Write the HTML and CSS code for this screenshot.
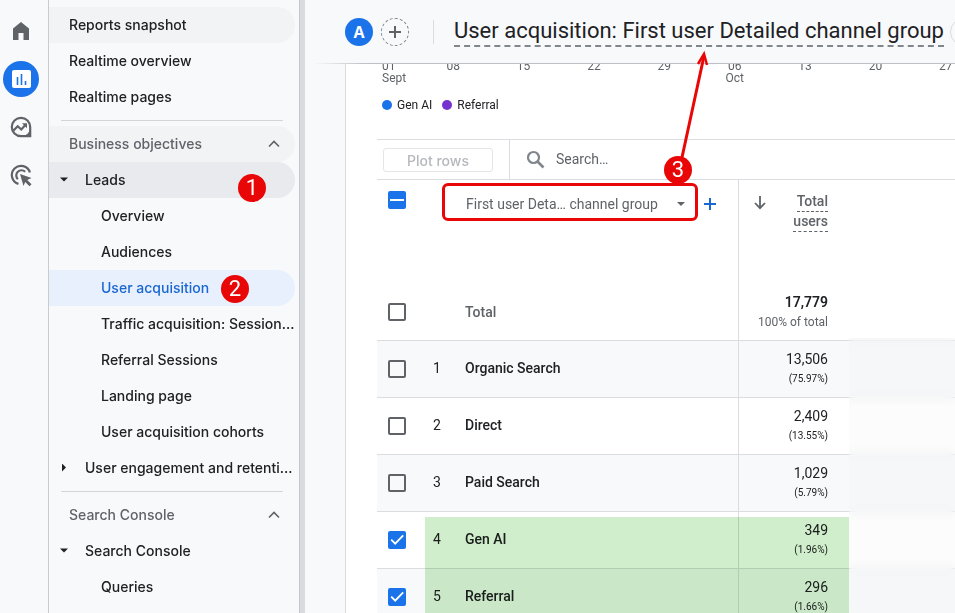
FILE: index.html
```
<!DOCTYPE html>
<html lang="en">
<head>
    <meta charset="UTF-8">
    <title>User acquisition: First user Detailed channel group</title>
    <link rel="stylesheet" href="styles.css">
</head>
<body>
    <nav class="rail">
        <a href="#" class="rail-item" aria-label="Home">
            <svg width="24" height="24" viewBox="0 0 24 24" fill="currentColor"><path d="M4 21V9.500L12 3l8 6.500V21h-5.500v-7h-5v7z"/></svg>
        </a>
        <a href="#" class="rail-item active" aria-label="Reports">
            <svg width="24" height="24" viewBox="0 0 24 24"><rect x="3" y="3" width="19" height="18" rx="2" fill="#fff"/><path d="M8.500 10v8M12.500 7v11M16.500 14v4" stroke="#1a73e8" stroke-width="1.600"/></svg>
        </a>
        <a href="#" class="rail-item" aria-label="Explore">
            <svg width="24" height="24" viewBox="0 0 24 24" fill="none" stroke="currentColor" stroke-width="2.200"><path d="M12 2.800a9.200 9.200 0 1 0 0 18.400h9.200V12A9.200 9.200 0 0 0 12 2.800z"/><path d="M15.500 21.200a10 10 0 0 0 5.700-5.700v5.700z" fill="currentColor" stroke-width="1"/><path d="M4.500 15.500l4.200-4.300 3.600 3.300 4.500-5"/><path d="M13 8.200h5v5z" fill="currentColor" stroke="none"/></svg>
        </a>
        <a href="#" class="rail-item" aria-label="Advertising">
            <svg width="24" height="24" viewBox="0 0 24 24" fill="none" stroke="currentColor" stroke-width="2.200"><path d="M9.500 20.900A9.200 9.200 0 1 1 20.900 9.500"/><path d="M8.800 16.200A5.200 5.200 0 1 1 16.200 8.800"/><path d="M11 11l11.500 4-4.200 2 4.200 4.200-2 2-4.300-4.200-1.700 4z" fill="currentColor" stroke="none"/></svg>
        </a>
    </nav>

    <aside class="sidebar">
        <a href="#" class="item hover">Reports snapshot</a>
        <a href="#" class="item">Realtime overview</a>
        <a href="#" class="item">Realtime pages</a>
        <hr>
        <button class="item section hover">Business objectives
            <svg width="12" height="8" viewBox="0 0 12 8"><path d="M1 6.500l5-5 5 5"/></svg>
        </button>
        <button class="item parent open">
            <i class="caret down"></i>Leads
            <span class="badge badge-leads">1</span>
        </button>
        <a href="#" class="item child">Overview</a>
        <a href="#" class="item child">Audiences</a>
        <a href="#" class="item child selected">User acquisition <span class="badge badge-acquisition">2</span></a>
        <a href="#" class="item child">Traffic acquisition: Session…</a>
        <a href="#" class="item child">Referral Sessions</a>
        <a href="#" class="item child">Landing page</a>
        <a href="#" class="item child">User acquisition cohorts</a>
        <button class="item parent"><i class="caret right"></i>User engagement and retenti…</button>
        <hr>
        <button class="item section">Search Console
            <svg width="12" height="8" viewBox="0 0 12 8"><path d="M1 6.500l5-5 5 5"/></svg>
        </button>
        <button class="item parent"><i class="caret down"></i>Search Console</button>
        <a href="#" class="item child">Queries</a>
    </aside>

    <main>
        <header class="topbar">
            <span class="avatar">A</span>
            <button class="add" aria-label="Add comparison">
                <svg width="12" height="12" viewBox="0 0 12 12"><path d="M6 0v12M0 6h12" stroke="#5f6368" stroke-width="2"/></svg>
            </button>
            <span class="divider"></span>
            <h1>User acquisition: First user Detailed channel group</h1>
            <span class="status"></span>
        </header>

        <section class="card">
            <div class="axis">
                <span>01<br>Sept</span>
                <span>08</span>
                <span>15</span>
                <span>22</span>
                <span>29</span>
                <span>06<br>Oct</span>
                <span>13</span>
                <span>20</span>
                <span>27</span>
            </div>
            <div class="legend">
                <span class="key blue">Gen AI</span>
                <span class="key purple">Referral</span>
            </div>

            <div class="toolbar">
                <div class="plot"><button disabled>Plot rows</button></div>
                <label class="search">
                    <svg width="20" height="20" viewBox="0 0 20 20" fill="none" stroke="#80868b"><circle cx="7.500" cy="7.500" r="5.500" stroke-width="2.200"/><path d="M11.500 11.500l6 6" stroke-width="2.600"/></svg>
                    <input type="text" placeholder="Search…" aria-label="Search">
                </label>
            </div>

            <div class="table-wrap">
                <table>
                    <colgroup>
                        <col class="col-check">
                        <col class="col-num">
                        <col class="col-dim">
                        <col class="col-metric">
                        <col>
                    </colgroup>
                    <thead>
                        <tr class="head">
                            <th><input type="checkbox" class="mixed" aria-label="Select all rows"></th>
                            <th></th>
                            <th class="dim">
                                <div class="dim-picker">
                                    <select aria-label="Primary dimension">
                                        <option>First user Deta… channel group</option>
                                    </select>
                                    <button class="plus" aria-label="Add dimension">
                                        <svg width="12" height="12" viewBox="0 0 12 12"><path d="M6 0v12M0 6h12" stroke="#1967d2" stroke-width="2"/></svg>
                                    </button>
                                </div>
                            </th>
                            <th class="metric">
                                <div class="sort">
                                    <svg width="12" height="14" viewBox="0 0 12 14" fill="none" stroke="#5f6368" stroke-width="1.800"><path d="M6 0v12M1 7l5 5.200L11 7"/></svg>
                                    <span><u>Total</u><br><u>users</u></span>
                                </div>
                            </th>
                            <th></th>
                        </tr>
                    </thead>
                    <tbody>
                        <tr class="total">
                            <td><input type="checkbox" aria-label="Total"></td>
                            <td></td>
                            <td class="dim">Total</td>
                            <td class="metric"><b>17,779</b><small>100% of total</small></td>
                            <td></td>
                        </tr>
                        <tr>
                            <td><input type="checkbox" aria-label="Organic Search"></td>
                            <td class="num">1</td>
                            <td class="dim">Organic Search</td>
                            <td class="metric">13,506<small>(75.97%)</small></td>
                            <td></td>
                        </tr>
                        <tr>
                            <td><input type="checkbox" aria-label="Direct"></td>
                            <td class="num">2</td>
                            <td class="dim">Direct</td>
                            <td class="metric">2,409<small>(13.55%)</small></td>
                            <td></td>
                        </tr>
                        <tr>
                            <td><input type="checkbox" aria-label="Paid Search"></td>
                            <td class="num">3</td>
                            <td class="dim">Paid Search</td>
                            <td class="metric">1,029<small>(5.79%)</small></td>
                            <td></td>
                        </tr>
                        <tr>
                            <td><input type="checkbox" checked aria-label="Gen AI"></td>
                            <td class="num">4</td>
                            <td class="dim">Gen AI</td>
                            <td class="metric">349<small>(1.96%)</small></td>
                            <td></td>
                        </tr>
                        <tr>
                            <td><input type="checkbox" checked aria-label="Referral"></td>
                            <td class="num">5</td>
                            <td class="dim">Referral</td>
                            <td class="metric">296<small>(1.66%)</small></td>
                            <td></td>
                        </tr>
                    </tbody>
                </table>
                <div class="highlight"></div>
                <div class="frost"></div>
                <div class="callout"></div>
                <svg class="arrow" width="40" height="120" viewBox="0 0 40 120" fill="none" stroke="#e90606" stroke-width="3"><path d="M11 112L34 6"/><path d="M28 14L34 4l3 11" stroke-width="2.500"/></svg>
                <span class="badge badge-dim">3</span>
            </div>
        </section>
    </main>
</body>
</html>
```
FILE: styles.css
```
* {
    box-sizing: border-box;
}
body {
    margin: 0;
    display: flex;
    height: 100vh;
    overflow: hidden;
    background: #f8f9fb;
    color: #202124;
    font-family: Roboto, "Liberation Sans", sans-serif;
    font-size: 14px;
}
button, input, select {
    font: inherit;
    color: inherit;
}
button {
    border: none;
    background: none;
    padding: 0;
    cursor: pointer;
}

/* left icon rail */
.rail {
    flex: 0 0 49px;
    display: flex;
    flex-direction: column;
    gap: 12px;
    padding: 13px 9px 0 3px;
    border-right: 1px solid #c9cbcf;
}
.rail-item {
    display: flex;
    align-items: center;
    justify-content: center;
    width: 36px;
    height: 36px;
    border-radius: 50%;
    color: #5f6368;
}
.rail-item.active {
    background: #1a73e8;
}

/* report menu */
.sidebar {
    flex: 0 0 256px;
    padding: 7px 5px 0 0;
    border-right: 5px solid #dadbdf;
    box-shadow: inset -1px 0 #c4c6ca;
    font-family: Inter, Roboto, sans-serif;
    font-weight: 500;
}
.item {
    position: relative;
    display: flex;
    align-items: center;
    width: 100%;
    height: 36px;
    padding: 0 0 1px 20px;
    border-radius: 0 18px 18px 0;
    color: #202124;
    text-decoration: none;
    text-align: left;
    white-space: nowrap;
}
.item.hover {
    background: #f1f3f4;
}
.item.open {
    background: #e8eaed;
}
.item.selected {
    background: #e8f0fe;
    color: #1967d2;
}
.section {
    justify-content: space-between;
    padding-right: 15px;
    color: #5f6368;
}
.section svg {
    fill: none;
    stroke: #5f6368;
    stroke-width: 1.6;
}
.parent {
    padding-left: 11px;
}
.child {
    padding-left: 52px;
}
.caret {
    flex: none;
    width: 8px;
    height: 8px;
    margin-right: 17px;
    background: #202124;
}
.caret.down {
    clip-path: polygon(0 25%, 100% 25%, 50% 75%);
}
.caret.right {
    clip-path: polygon(25% 0, 75% 50%, 25% 100%);
}
hr {
    margin: 5px 12px;
    border: none;
    border-top: 1px solid #d3d5d9;
}

/* numbered markers */
.badge {
    position: absolute;
    width: 28px;
    height: 28px;
    border-radius: 50%;
    background: #e90606;
    color: #fff;
    font: 22px/28px Roboto, sans-serif;
    text-align: center;
    z-index: 3;
}
.badge-leads {
    top: 12px;
    left: 189px;
}
.badge-acquisition {
    top: 5px;
    left: 172px;
}
.badge-dim {
    top: -24px;
    left: 287px;
}

/* main area */
main {
    flex: 1;
    min-width: 0;
    overflow: hidden;
}
.topbar {
    position: relative;
    z-index: 1;
    display: flex;
    align-items: center;
    height: 64px;
    padding-left: 40px;
    background: #f8f9fb;
    border-bottom: 1px solid;
    border-image: linear-gradient(90deg, transparent 10px, #bdc1c6 60px) 1;
    white-space: nowrap;
}
.avatar, .add, .status {
    flex: none;
    width: 28px;
    height: 28px;
    border-radius: 50%;
}
.avatar {
    background: #1a73e8;
    color: #fff;
    font: 700 16px/28px "Open Sans", sans-serif;
    text-align: center;
}
.add {
    display: flex;
    align-items: center;
    justify-content: center;
    margin-left: 8px;
    border: 1px dashed #80868b;
}
.divider {
    height: 24px;
    margin: 0 20px 0 24px;
    border-left: 1px solid #dadce0;
}
h1 {
    flex: none;
    margin: 0 6px 0 0;
    border-bottom: 2px dashed #80868b;
    font: 400 22px/28px Roboto, sans-serif;
}
.status {
    border: 1px solid #dadce0;
}
.card {
    margin-left: 40px;
    padding-left: 31px;
    border-left: 1px solid #dadce0;
    background: #fff;
}
/* the chart is scrolled, its axis runs under the top bar */
.axis {
    display: flex;
    margin: -5px -26px 0 5px;
    padding-top: 1px;
    color: #5f6368;
    font-size: 12px;
    line-height: 12px;
    text-align: center;
}
.axis span {
    flex: 1;
}
.axis span:first-child {
    flex: 0 0 36px;
    text-align: left;
}
.legend {
    display: flex;
    gap: 10px;
    padding: 12px 5px 25px;
    font-size: 12px;
    line-height: 18px;
}
.key {
    display: flex;
    align-items: center;
    gap: 5px;
}
.key::before {
    content: "";
    width: 10px;
    height: 10px;
    border-radius: 50%;
}
.blue::before {
    background: #1a73e8;
}
.purple::before {
    background: #7733cf;
}

.toolbar {
    display: flex;
    height: 41px;
    border-top: 1px solid #dadce0;
    border-bottom: 1px solid #dadce0;
}
.plot {
    flex: 0 0 133px;
    padding: 8px 6px;
    border-right: 1px solid #dadce0;
}
.plot button {
    display: block;
    width: 110px;
    height: 24px;
    border: 1px solid #e3e5e8;
    border-radius: 3px;
    color: #b5b8bc;
    font-family: Inter, Roboto, sans-serif;
    font-weight: 500;
    cursor: default;
}
.search {
    flex: 1;
    display: flex;
    align-items: center;
    gap: 10px;
    padding-left: 16px;
}
.search input {
    flex: 1;
    min-width: 0;
    padding: 0 0 2px;
    border: none;
    outline: none;
    background: none;
}
.search input::placeholder {
    color: #5f6368;
    opacity: 1;
}

/* table */
.table-wrap {
    position: relative;
}
table {
    width: 100%;
    table-layout: fixed;
    border-spacing: 0;
}
.col-check {
    width: 48px;
}
.col-num {
    width: 40px;
}
.col-dim {
    width: 274px;
}
.col-metric {
    width: 110px;
}
th, td {
    height: 57px;
    padding: 0;
    border-bottom: 1px solid #dadce0;
    text-align: left;
    vertical-align: middle;
}
td.num, .num + .dim {
    padding-bottom: 2px;
}
.head th {
    height: 104px;
    padding-top: 11px;
    border-bottom: none;
    vertical-align: top;
    font-weight: 400;
}
tbody tr:nth-child(even) {
    background: #f8f9fb;
}
.num {
    padding-left: 8px;
}
.dim {
    border-right: 1px solid #dadce0;
    font-weight: 500;
}
.metric {
    padding-right: 21px;
    line-height: 20px;
    text-align: right;
}
.metric b {
    font-weight: 600;
}
.metric small {
    display: block;
    font-size: 10px;
}
.total .dim {
    color: #5f6368;
}
.total small {
    color: #5f6368;
    font-size: 12px;
}
input[type="checkbox"] {
    appearance: none;
    display: block;
    width: 18px;
    height: 18px;
    margin: 0 0 0 11px;
    border: 2px solid #5f6368;
    border-radius: 2px;
}
input[type="checkbox"]:checked, input.mixed {
    border-color: #1a73e8;
    background: #1a73e8;
}
input[type="checkbox"]:checked::before {
    content: "";
    display: block;
    width: 14px;
    height: 14px;
    background: #fff;
    clip-path: polygon(4% 52%, 13% 43%, 37% 66%, 90% 13%, 99% 22%, 37% 85%);
}
input.mixed::before {
    content: "";
    display: block;
    height: 2px;
    margin-top: 6px;
    background: #fff;
}
.dim-picker {
    display: flex;
    align-items: center;
    gap: 19px;
    height: 26px;
}
.dim-picker select {
    appearance: none;
    width: 220px;
    padding: 0 0 0 1px;
    border: none;
    outline: none;
    color: #5f6368;
    background: none;
}
.dim-picker::after {
    content: "";
    order: 1;
    width: 8px;
    height: 4px;
    margin-left: -27px;
    background: #5f6368;
    clip-path: polygon(0 0, 100% 0, 50% 100%);
}
.plus {
    order: 2;
    display: flex;
}
.sort {
    display: flex;
    justify-content: space-between;
    padding-left: 15px;
    color: #5f6368;
    font-weight: 500;
}
.sort svg {
    margin-top: 5px;
}
.sort u {
    padding-bottom: 2px;
    border-bottom: 1px dashed #5f6368;
    text-decoration: none;
}

/* overlays */
.highlight {
    position: absolute;
    top: 337px;
    bottom: 0;
    left: 48px;
    width: 424px;
    background: #d0eecb;
    mix-blend-mode: multiply;
}
.frost {
    position: absolute;
    top: 158px;
    bottom: 0;
    left: 472px;
    right: 0;
    background: rgba(240, 240, 240, 0.2);
    backdrop-filter: blur(4px);
}
.callout {
    position: absolute;
    top: 3px;
    left: 65px;
    width: 256px;
    height: 38px;
    border: 3px solid #e90606;
    border-radius: 6px;
    pointer-events: none;
}
.arrow {
    position: absolute;
    top: -130px;
    left: 293px;
    z-index: 2;
}
```
